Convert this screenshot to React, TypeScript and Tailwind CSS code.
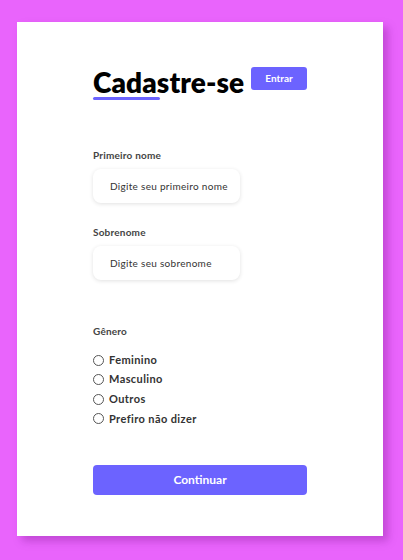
import React from 'react';

const options = ['Feminino', 'Masculino', 'Outros', 'Prefiro não dizer'];

const Field = ({ label, placeholder }: { label: string; placeholder: string }) => (
  <div>
    <label className="block text-[10px] leading-[14px] font-bold text-[#444] tracking-[0.2px]">{label}</label>
    <div className="mt-[7px] w-[147px] h-[34px] rounded-[8px] bg-white shadow-[0_1px_4px_rgba(0,0,0,0.12)] flex items-center pl-[17px] pr-[6px]">
      <span className="min-w-0 overflow-hidden whitespace-nowrap text-[10px] text-[#333] tracking-[0.3px]">{placeholder}</span>
    </div>
  </div>
);

export default function App() {
  return (
    <div className="min-h-screen w-full bg-[#e964fc] pt-[22px] pl-[17px] font-['Lato',sans-serif]">
      <div className="w-[366px] h-[514px] bg-white shadow-[5px_5px_8px_rgba(120,20,140,0.35)] pl-[76px] pt-[45px]">
        <div className="w-[214px]">
          {/* Header */}
          <div className="flex items-start justify-between">
            <div className="flex flex-col">
              <h1 className="text-[28px] leading-[30px] font-extrabold text-black tracking-[0.1px]">Cadastre-se</h1>
              <div className="h-[3px] w-[67px] rounded-full bg-[#6c63ff]" />
            </div>
            <button className="w-[56px] h-[23px] rounded-[3px] bg-[#6c63ff] text-white text-[10px] font-bold">
              Entrar
            </button>
          </div>

          <div className="mt-[48px]">
            <Field label="Primeiro nome" placeholder="Digite seu primeiro nome" />
          </div>
          <div className="mt-[22px]">
            <Field label="Sobrenome" placeholder="Digite seu sobrenome" />
          </div>

          {/* Genero */}
          <div className="mt-[44px]">
            <label className="block text-[10px] leading-[14px] font-bold text-[#444] tracking-[0.2px]">Gênero</label>
            <div className="mt-[15px] flex flex-col gap-[5.6px]">
              {options.map((o) => (
                <div key={o} className="flex items-center h-[14px]">
                  <span className="w-[11px] h-[11px] rounded-full border border-[#555] bg-white" />
                  <span className="ml-[5px] text-[11px] font-bold text-[#333] tracking-[0.4px]">{o}</span>
                </div>
              ))}
            </div>
          </div>

          <button className="mt-[39px] w-[214px] h-[30px] rounded-[4px] bg-[#6c63ff] text-white text-[12px] font-bold">
            Continuar
          </button>
        </div>
      </div>
    </div>
  );
}
